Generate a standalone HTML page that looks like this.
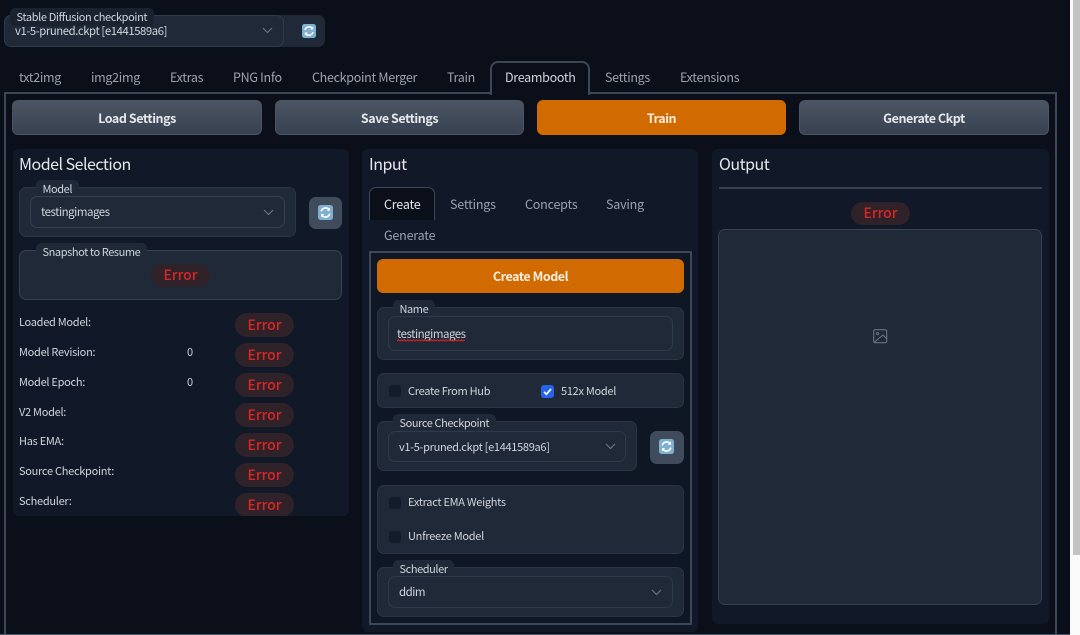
<!DOCTYPE html>
<html><head><meta charset="utf-8">
<style>
*{box-sizing:border-box}
html,body{margin:0;padding:0;width:1080px;height:635px;overflow:hidden;background:#0b0f19}
body{position:relative;font-family:"Noto Sans CJK SC","Liberation Sans",sans-serif;color:#d1d5db;font-size:11.5px;letter-spacing:-.5px}
.a{position:absolute}
.t{position:absolute;white-space:nowrap;line-height:18px;transform:translateY(-9px)}
.tab{font-size:12.5px;letter-spacing:-.3px;color:#9ca3af}
.itab{font-size:12.5px;letter-spacing:-.2px;color:#9ca3af}
.c{font-size:11px;letter-spacing:-.28px}
.btn{position:absolute;top:100px;height:35px;border-radius:6px;background:linear-gradient(#4b5563,#374151);color:#e5e7eb;font-weight:700;font-size:12.5px;letter-spacing:-.45px;text-align:center;line-height:34px;border:1px solid #4b5563}
.or{background:#d16a00;border-color:#d16a00;color:#fbeedd}
.panel{position:absolute;background:#111827;border-radius:6px}
.blk{position:absolute;background:#1f2937;border:1px solid #2b3545;border-radius:7px}
.inp{position:absolute;background:#1f2937;border:1px solid #374151;border-radius:7px}
.lab{position:absolute;height:18px;background:#1f2937;border-radius:5px;color:#d1d5db;font-size:11px;letter-spacing:-.42px;line-height:18px;padding:0 6.5px;white-space:nowrap}
.h{font-size:16px;letter-spacing:-.5px;color:#e5e7eb;position:absolute;line-height:22px;white-space:nowrap}
.err{position:absolute;width:59px;height:23px;border-radius:12px;background:#2f2229;color:#dc2626;font-size:14px;letter-spacing:0;font-weight:500;text-align:center;line-height:23px}
.ref{position:absolute;width:33px;height:32px;border-radius:7px;background:#404b5b}
.ref svg{position:absolute;left:9px;top:8px}
.cb{position:absolute;width:12px;height:12px;border-radius:3px;background:#141c2c}
.arrow{position:absolute}
.row{font-size:11px;letter-spacing:-.28px;color:#d1d5db}
</style></head><body>

<!-- top checkpoint -->
<div class="a" style="left:4px;top:15px;width:321px;height:32px;background:#1f2937;border-radius:7px"></div>
<div class="a" style="left:4px;top:15px;width:280px;height:32px;background:#1f2937;border:1px solid #2f3a4a;border-radius:7px"></div>
<div class="lab" style="left:10px;top:8px;background:#1a2230;letter-spacing:-.37px">Stable Diffusion checkpoint</div>
<div class="t" style="left:15px;top:31px;font-size:11.3px;letter-spacing:-.4px">v1-5-pruned.ckpt [e1441589a6]</div>
<svg class="arrow" style="left:262px;top:27px" width="11" height="7" viewBox="0 0 11 7"><path d="M1 1l4.5 4.5L10 1" fill="none" stroke="#6b7280" stroke-width="1.2"/></svg>
<svg class="a" style="left:302px;top:24px" width="14" height="14" viewBox="0 0 14 14"><rect width="14" height="14" rx="2.5" fill="#7fb0d0"/><path d="M3 6a4.2 4.2 0 0 1 7.4-1.6M11 8a4.2 4.2 0 0 1-7.4 1.6" fill="none" stroke="#fff" stroke-width="1.5"/><path d="M11.2 2.5v3h-3zM2.8 11.5v-3h3z" fill="#fff"/></svg>

<!-- main tabs -->
<div class="a" style="left:4px;top:92px;width:1053px;height:560px;border:2px solid #3d4757"></div>
<div class="a" style="left:490px;top:61px;width:100px;height:34px;background:#0b0f19;border:2px solid #3d4757;border-bottom:none;border-radius:8px 8px 0 0"></div>
<div class="t tab" style="left:19px;top:77px">txt2img</div>
<div class="t tab" style="left:91px;top:77px">img2img</div>
<div class="t tab" style="left:170px;top:77px">Extras</div>
<div class="t tab" style="left:233px;top:77px">PNG Info</div>
<div class="t tab" style="left:312px;top:77px">Checkpoint Merger</div>
<div class="t tab" style="left:447px;top:77px">Train</div>
<div class="t tab" style="left:505px;top:77px;color:#d1d5db">Dreambooth</div>
<div class="t tab" style="left:605px;top:77px">Settings</div>
<div class="t tab" style="left:680px;top:77px">Extensions</div>

<div class="btn" style="left:12px;width:250px">Load Settings</div>
<div class="btn" style="left:275px;width:249px">Save Settings</div>
<div class="btn or" style="left:537px;width:249px">Train</div>
<div class="btn" style="left:799px;width:250px">Generate Ckpt</div>

<!-- Model selection -->
<div class="panel" style="left:13px;top:149px;width:336px;height:367px"></div>
<div class="h" style="left:19px;top:152px">Model Selection</div>
<div class="blk" style="left:19px;top:187px;width:277px;height:50px"></div>
<div class="lab" style="left:36px;top:180px">Model</div>
<div class="inp" style="left:30px;top:196px;width:255px;height:32px"></div>
<div class="t" style="left:41px;top:212px">testingimages</div>
<svg class="arrow" style="left:263px;top:209px" width="11" height="7" viewBox="0 0 11 7"><path d="M1 1l4.5 4.5L10 1" fill="none" stroke="#6b7280" stroke-width="1.2"/></svg>
<div class="ref" style="left:309px;top:197px"><svg width="15" height="15" viewBox="0 0 14 14"><rect width="14" height="14" rx="2.5" fill="#7fb0d0"/><path d="M3 6a4.2 4.2 0 0 1 7.4-1.6M11 8a4.2 4.2 0 0 1-7.4 1.6" fill="none" stroke="#fff" stroke-width="1.5"/><path d="M11.2 2.5v3h-3zM2.8 11.5v-3h3z" fill="#fff"/></svg></div>

<div class="blk" style="left:19px;top:250px;width:323px;height:50px;border-color:#374151"></div>
<div class="lab" style="left:36px;top:243px">Snapshot to Resume</div>
<div class="err" style="left:151px;top:264px">Error</div>

<div class="t row" style="left:19px;top:322px">Loaded Model:</div>
<div class="t row" style="left:19px;top:352px">Model Revision:</div>
<div class="t row" style="left:19px;top:382px">Model Epoch:</div>
<div class="t row" style="left:19px;top:412px">V2 Model:</div>
<div class="t row" style="left:19px;top:441px">Has EMA:</div>
<div class="t row" style="left:19px;top:471px">Source Checkpoint:</div>
<div class="t row" style="left:19px;top:501px">Scheduler:</div>
<div class="t row" style="left:187px;top:352px">0</div>
<div class="t row" style="left:187px;top:382px">0</div>
<div class="err" style="left:235px;top:313px;height:24px;line-height:24px">Error</div>
<div class="err" style="left:235px;top:343px;height:24px;line-height:24px">Error</div>
<div class="err" style="left:235px;top:373px;height:24px;line-height:24px">Error</div>
<div class="err" style="left:235px;top:403px;height:24px;line-height:24px">Error</div>
<div class="err" style="left:235px;top:433px;height:24px;line-height:24px">Error</div>
<div class="err" style="left:235px;top:463px;height:24px;line-height:24px">Error</div>
<div class="a" style="left:235px;top:493px;width:59px;height:23px;overflow:hidden"><div class="err" style="left:0;top:0;height:24px;line-height:24px">Error</div></div>

<!-- Input -->
<div class="panel" style="left:362px;top:149px;width:336px;height:483px"></div>
<div class="h" style="left:369px;top:152px">Input</div>
<div class="a" style="left:369px;top:251px;width:323px;height:374px;border:2px solid #3d4757;background:#0f1624"></div>
<div class="a" style="left:369px;top:187px;width:66px;height:33px;background:#0b0f19;border:1px solid #3d4757;border-bottom:none;border-radius:7px 7px 0 0"></div>
<div class="t itab" style="left:384px;top:204px;color:#e5e7eb">Create</div>
<div class="t itab" style="left:450px;top:204px">Settings</div>
<div class="t itab" style="left:525px;top:204px">Concepts</div>
<div class="t itab" style="left:606px;top:204px">Saving</div>
<div class="t itab" style="left:384px;top:235px">Generate</div>

<div class="btn or" style="left:377px;top:259px;width:307px;height:34px;line-height:32px">Create Model</div>

<div class="blk" style="left:377px;top:307px;width:307px;height:53px"></div>
<div class="lab" style="left:393px;top:300px">Name</div>
<div class="inp" style="left:388px;top:316px;width:285px;height:35px;border-color:#2f3a4a"></div>
<div class="t" style="left:397px;top:334px">testingimages</div>
<svg class="a" style="left:397px;top:339px" width="68" height="3" viewBox="0 0 68 3"><path d="M0 2L1.5 .8 3 2 4.5 .8 6 2 7.5 .8 9 2 10.5 .8 12 2 13.500 .8 15 2 16.500 .8 18 2 19.500 .8 21 2 22.500 .8 24 2 25.500 .8 27 2 28.500 .8 30 2 31.500 .8 33 2 34.500 .8 36 2 37.500 .8 39 2 40.500 .8 42 2 43.500 .8 45 2 46.500 .8 48 2 49.500 .8 51 2 52.500 .8 54 2 55.500 .8 57 2 58.500 .8 60 2 61.500 .8 63 2 64.500 .8 66 2 68 .8" fill="none" stroke="#d22" stroke-width="1"/></svg>

<div class="blk" style="left:377px;top:373px;width:307px;height:35px"></div>
<div class="cb" style="left:389px;top:385px"></div>
<div class="t c" style="left:408px;top:391px">Create From Hub</div>
<svg class="a" style="left:541px;top:385px" width="13" height="13" viewBox="0 0 13 13"><rect width="13" height="13" rx="3" fill="#2563eb"/><path d="M3 6.8l2.4 2.4L10 4" fill="none" stroke="#fff" stroke-width="1.7"/></svg>
<div class="t c" style="left:561px;top:391px">512x Model</div>

<div class="blk" style="left:377px;top:421px;width:260px;height:50px"></div>
<div class="lab" style="left:393px;top:414px">Source Checkpoint</div>
<div class="inp" style="left:388px;top:431px;width:238px;height:31px;border-color:#2f3a4a"></div>
<div class="t c" style="left:399px;top:447px;letter-spacing:-.3px">v1-5-pruned.ckpt [e1441589a6]</div>
<svg class="arrow" style="left:605px;top:443px" width="11" height="7" viewBox="0 0 11 7"><path d="M1 1l4.5 4.5L10 1" fill="none" stroke="#6b7280" stroke-width="1.2"/></svg>
<div class="ref" style="left:650px;top:431px;width:34px;height:33px"><svg width="15" height="15" viewBox="0 0 14 14"><rect width="14" height="14" rx="2.5" fill="#7fb0d0"/><path d="M3 6a4.2 4.2 0 0 1 7.4-1.6M11 8a4.2 4.2 0 0 1-7.4 1.6" fill="none" stroke="#fff" stroke-width="1.5"/><path d="M11.2 2.5v3h-3zM2.8 11.5v-3h3z" fill="#fff"/></svg></div>

<div class="blk" style="left:377px;top:485px;width:307px;height:69px"></div>
<div class="cb" style="left:389px;top:497px"></div>
<div class="t c" style="left:408px;top:502px">Extract EMA Weights</div>
<div class="cb" style="left:389px;top:531px"></div>
<div class="t c" style="left:408px;top:536px">Unfreeze Model</div>

<div class="blk" style="left:377px;top:567px;width:307px;height:50px"></div>
<div class="lab" style="left:393px;top:560px">Scheduler</div>
<div class="inp" style="left:388px;top:576px;width:285px;height:32px;border-color:#2f3a4a"></div>
<div class="t" style="left:399px;top:592px">ddim</div>
<svg class="arrow" style="left:651px;top:589px" width="11" height="7" viewBox="0 0 11 7"><path d="M1 1l4.5 4.5L10 1" fill="none" stroke="#6b7280" stroke-width="1.2"/></svg>

<!-- Output -->
<div class="panel" style="left:712px;top:149px;width:337px;height:475px"></div>
<div class="h" style="left:719px;top:152px">Output</div>
<div class="a" style="left:719px;top:187px;width:323px;height:2px;background:#374151"></div>
<div class="err" style="left:851px;top:202px">Error</div>
<div class="blk" style="left:718px;top:229px;width:324px;height:376px;border-color:#374151"></div>
<svg class="a" style="left:873px;top:329px" width="15" height="15" viewBox="0 0 15 15"><rect x=".7" y=".7" width="13" height="13" rx="1.5" fill="none" stroke="#6b7280" stroke-width="1.1"/><circle cx="4.6" cy="4.6" r="1.1" fill="none" stroke="#6b7280"/><path d="M1 13.5L10 6l4 4" fill="none" stroke="#6b7280" stroke-width="1.1"/></svg>

<!-- scrollbar and bottom -->
<div class="a" style="left:0;top:634px;width:1070px;height:1px;background:#4b5563"></div>
<div class="a" style="left:1070px;top:0;width:10px;height:635px;background:#fafafa"></div>
<div class="a" style="left:1073px;top:0;width:7px;height:555px;background:#c2c2c2"></div>
</body></html>
